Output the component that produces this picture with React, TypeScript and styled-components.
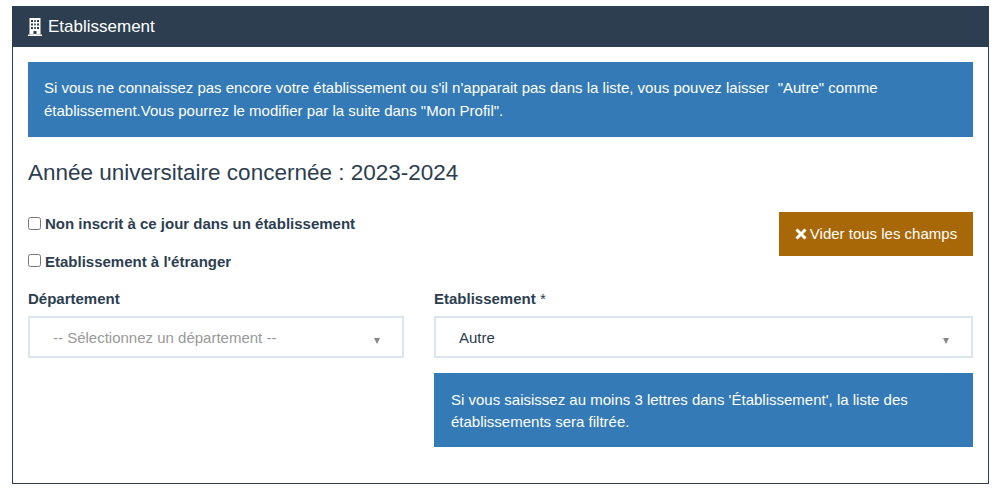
import React from "react";
import styled, { createGlobalStyle } from "styled-components";

const Global = createGlobalStyle`
  html, body { margin: 0; padding: 0; background: #fff; }
  body { font-family: "Liberation Sans", Arial, sans-serif; font-size: 15px; line-height: 22.5px; color: #2c3e50; }
  * { box-sizing: border-box; }
`;
const Page = styled.div`
  width: 1000px;
  height: 498px;
  padding: 6px 11px 14px 12px;
`;
const Panel = styled.section`
  height: 478px;
  border: 1px solid #2c3e50;
  border-top: 0;
  background: #fff;
`;
const PanelHead = styled.header`
  height: 41px;
  margin: 0 -1px;
  background: #2c3e50;
  color: #fff;
  display: flex;
  align-items: center;
  gap: 6px;
  padding: 2px 0 0 16px;
  font-size: 17px;
`;
const BuildingIcon = styled.svg`
  margin: -2px 0 0 0;
  flex: none;
`;
const PanelBody = styled.div`
  padding: 15px;
`;
const Alert = styled.div`
  background: #337ab7;
  color: #fff;
  padding: 15px 16px;
  font-size: 15px;
`;
const Title = styled.h3`
  margin: 21px 0 0;
  font-size: 22.5px;
  font-weight: 400;
  line-height: 30px;
  color: #2c3e50;
`;
const ChoiceRow = styled.div`
  display: flex;
  justify-content: space-between;
  align-items: flex-start;
  margin-top: 24px;
`;
const Checks = styled.div`
  display: flex;
  flex-direction: column;
  gap: 15px;
  padding-top: 1px;
`;
const Check = styled.label`
  display: flex;
  align-items: center;
  gap: 4px;
  font-weight: 700;
  font-size: 15px;
  height: 22.5px;
`;
const Box = styled.input`
  width: 13px;
  height: 13px;
  margin: -2px 0 0;
`;
const Clear = styled.button`
  width: 194px;
  height: 44px;
  border: 0;
  padding: 0 0 2px;
  background: #a86808;
  color: #fff;
  font: 400 15px "Liberation Sans", Arial, sans-serif;
  display: flex;
  align-items: center;
  justify-content: center;
  gap: 3px;
`;
const CrossIcon = styled.svg`
  margin-top: 2px;
  flex: none;
`;
const Fields = styled.div`
  display: grid;
  grid-template-columns: 376px 539px;
  column-gap: 30px;
  margin-top: 15px;
`;
const Field = styled.div`
  display: flex;
  flex-direction: column;
`;
const Label = styled.div<{ $bold?: boolean }>`
  font-weight: ${(p) => (p.$bold ? 700 : 400)};
  font-size: 15px;
  height: 22.5px;
  margin-bottom: 5px;
`;
const LabelBold = styled.span`
  font-weight: 700;
`;
const Select = styled.div<{ $muted?: boolean }>`
  height: 42px;
  border: 2px solid #dce4ec;
  display: flex;
  align-items: center;
  justify-content: space-between;
  padding: 3px 22px 0 23px;
  font-size: 15px;
  color: ${(p) => (p.$muted ? "#999" : "#2c3e50")};
`;
const Caret = styled.span`
  width: 0;
  height: 0;
  margin-top: 6px;
  border-left: 3px solid transparent;
  border-right: 3px solid transparent;
  border-top: 6px solid #888;
`;
const Hint = styled(Alert)`
  margin-top: 15px;
  height: 74px;
  line-height: 22px;
  padding: 16px 16px 0 17px;
`;

const Building = () => (
  <BuildingIcon width="14" height="18" viewBox="0 0 14 18" aria-hidden="true">
    <path
      fill="#fff"
      fillRule="evenodd"
      d="M1.500 0h11v16.500h-4V13h-3v3.500h-4zM3 2v2h2V2zM6.200 2v2h1.600V2zM9 2v2h2V2zM3 5.500v2h2v-2zM6.200 5.500v2h1.600v-2zM9 5.500v2h2v-2zM3 9v2h2V9zM6.200 9v2h1.600V9zM9 9v2h2V9z"
    />
    <path fill="#fff" d="M0 16.500h5.500v-.5h3v.5H14V18H0z" />
  </BuildingIcon>
);

const Cross = () => (
  <CrossIcon width="12" height="12" viewBox="0 0 12 12" aria-hidden="true">
    <path d="M1.500 1.500l9 9M10.500 1.500l-9 9" stroke="#fff" strokeWidth="3" />
  </CrossIcon>
);

export default function App() {
  return (
    <Page>
      <Global />
      <Panel>
        <PanelHead>
          <Building />
          Etablissement
        </PanelHead>
        <PanelBody>
          <Alert>
            Si vous ne connaissez pas encore votre établissement ou s'il n'apparait pas dans la liste, vous pouvez laisser&nbsp; "Autre" comme
            établissement.Vous pourrez le modifier par la suite dans "Mon Profil".
          </Alert>
          <Title>Année universitaire concernée : 2023-2024</Title>
          <ChoiceRow>
            <Checks>
              <Check>
                <Box type="checkbox" />
                Non inscrit à ce jour dans un établissement
              </Check>
              <Check>
                <Box type="checkbox" />
                Etablissement à l'étranger
              </Check>
            </Checks>
            <Clear>
              <Cross />
              Vider tous les champs
            </Clear>
          </ChoiceRow>
          <Fields>
            <Field>
              <Label $bold>Département</Label>
              <Select $muted>
                -- Sélectionnez un département --
                <Caret />
              </Select>
            </Field>
            <Field>
              <Label>
                <LabelBold>Etablissement</LabelBold> *
              </Label>
              <Select>
                Autre
                <Caret />
              </Select>
              <Hint>
                Si vous saisissez au moins 3 lettres dans 'Établissement', la liste des établissements sera filtrée.
              </Hint>
            </Field>
          </Fields>
        </PanelBody>
      </Panel>
    </Page>
  );
}
